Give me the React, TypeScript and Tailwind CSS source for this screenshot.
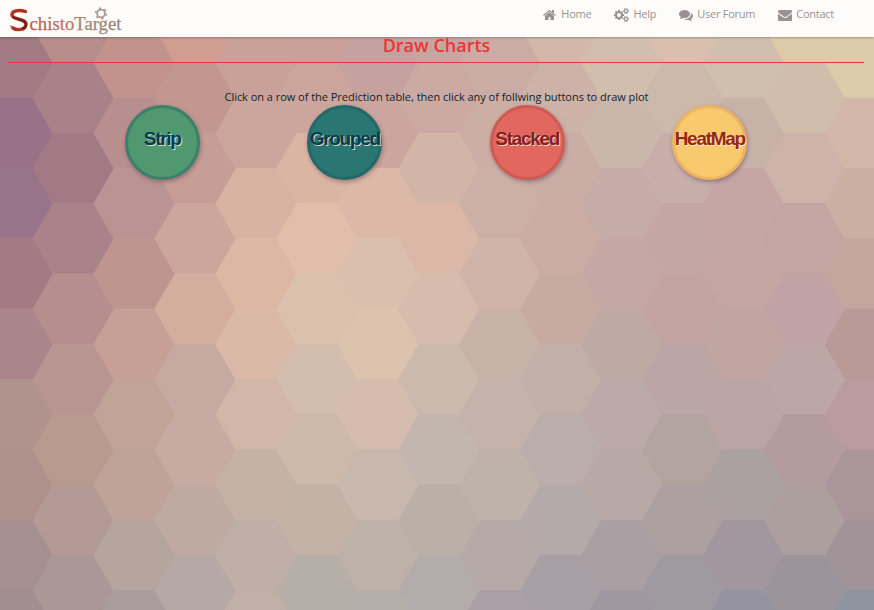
import React from "react";

// Column and row pitch of the honeycomb backdrop
const COL = 60.95;
const ROW = 70.35;
const HALF_W = 40.6;
const HALF_FLAT = 20.3;

const columns: string[][] = [
  ["#a17a83", "#99728a", "#99738a", "#a27b85", "#aa868b", "#b0938d", "#ae918b", "#a68f90", "#a08e92"],
  ["#b78d8c", "#a98289", "#a27a86", "#a98389", "#b68e8e", "#b89590", "#b89a8e", "#b49a95", "#aa9796"],
  ["#c2938d", "#b88e8f", "#ba9492", "#bf968f", "#c6a097", "#c1a398", "#c0a398", "#b5a59c", "#ab9d9e"],
  ["#d09d91", "#c19790", "#c69e97", "#cca69c", "#d3ae9f", "#c6aaa2", "#c7aaa1", "#bfaaa2", "#b5a8a5"],
  ["#c9a199", "#cca69d", "#d8b2a2", "#dcb8a4", "#dbb9a9", "#d1b6a9", "#c6b1a5", "#c0afa7", "#c1b0a7"],
  ["#c9a19a", "#cca69d", "#dab5a3", "#e1bea9", "#dac1ad", "#d2bdae", "#ccb9aa", "#c4b2a7", "#b6afa8"],
  ["#c5a19f", "#cba69e", "#dbb8a7", "#dbbfae", "#dbc3ae", "#d5bcae", "#c8b8ad", "#beb1a8", "#b6afa9"],
  ["#c7a5a0", "#ccaaa3", "#d2b5a6", "#dab7a7", "#d6bcad", "#cbb9ad", "#c3b6af", "#bab0a6", "#b4abab"],
  ["#cbaca5", "#ccaea5", "#ccafa6", "#d0b4a9", "#c8b2a7", "#c5b2aa", "#bfb2a9", "#b6aaa9", "#aaa0a6"],
  ["#d3b7a8", "#ccb2a7", "#caada5", "#caaca5", "#c7aaa2", "#c2afa8", "#bbaeaa", "#b5aaaa", "#a9a0a5"],
  ["#d1beac", "#cbb6ac", "#c6aca7", "#c5a8a3", "#bfaaa3", "#bbaaa7", "#b8a9a7", "#aaa0a3", "#9f98a0"],
  ["#dabfae", "#cdb9ac", "#c8aea9", "#c4a7a3", "#c3a4a1", "#bba6a5", "#b4a4a0", "#aca1a0", "#9f99a0"],
  ["#d1bfad", "#c8b2a8", "#c5a6a3", "#c5a6a2", "#c0a5a0", "#bba5a4", "#aba1a0", "#a2979f", "#94939f"],
  ["#dccaa9", "#d1bdab", "#cdb3aa", "#c4a5a2", "#c1a3a5", "#bca6a6", "#b49c9e", "#ac9f9e", "#9b959b"],
  ["#ddcba9", "#d3b8a9", "#cbafa3", "#c4a69f", "#b99a97", "#bb9b9e", "#aa959b", "#a09499", "#8f95a0"],
];

function Honeycomb() {
  return (
    <svg className="absolute inset-0 h-full w-full" viewBox="0 0 874 610" aria-hidden="true">
      {columns.map((colors, c) =>
        colors.map((fill, r) => {
          const cx = 12.7 + c * COL;
          const top = (c % 2 === 0 ? 27.8 : -7.4) + r * ROW;
          const mid = top + ROW / 2;
          const bottom = top + ROW;
          const points = [
            [cx - HALF_W, mid],
            [cx - HALF_FLAT, top],
            [cx + HALF_FLAT, top],
            [cx + HALF_W, mid],
            [cx + HALF_FLAT, bottom],
            [cx - HALF_FLAT, bottom],
          ];
          return <polygon key={`${c}-${r}`} points={points.join(" ")} fill={fill} stroke={fill} strokeWidth="1.2" />;
        })
      )}
    </svg>
  );
}

const HOME =
  "M1408 992v480q0 26-19 45t-45 19h-384v-384h-256v384h-384q-26 0-45-19t-19-45v-480q0-1 .5-3t.5-3l575-474 575 474q1 2 1 6zm223-69l-62 74q-8 9-21 11h-3q-13 0-21-7l-692-577-692 577q-12 8-24 7-13-2-21-11l-62-74q-8-10-7-23.5t11-21.5l719-599q32-26 76-26t76 26l244 204v-195q0-14 9-23t23-9h192q14 0 23 9t9 23v408l219 182q10 8 11 21.5t-7 23.5z";
const COGS =
  "M896 896q0-106-75-181t-181-75-181 75-75 181 75 181 181 75 181-75 75-181zm768 512q0-52-38-90t-90-38-90 38-38 90q0 53 37.5 90.5t90.5 37.5 90.5-37.5 37.5-90.5zm0-1024q0-52-38-90t-90-38-90 38-38 90q0 53 37.5 90.5t90.5 37.5 90.5-37.5 37.5-90.5zm-384 421v185q0 10-7 19.5t-16 10.5l-155 24q-11 35-32 76 34 48 90 115 7 11 7 20 0 12-7 19-23 30-82.5 89.5t-78.5 59.5q-11 0-21-7l-115-90q-37 19-77 31-11 108-23 155-7 24-30 24h-186q-11 0-20-7.5t-10-17.5l-23-153q-34-10-75-31l-118 89q-7 7-20 7-11 0-21-8-144-133-144-160 0-9 7-19 10-14 41-53t47-61q-23-44-35-82l-152-24q-10-1-17-9.5t-7-19.5v-185q0-10 7-19.5t16-10.5l155-24q11-35 32-76-34-48-90-115-7-11-7-20 0-12 7-20 22-30 82-89t79-59q11 0 21 7l115 90q34-18 77-32 11-108 23-154 7-24 30-24h186q11 0 20 7.500t10 17.500l23 153q34 10 75 31l118-89q8-7 20-7 11 0 21 8 144 133 144 160 0 8-7 19-12 16-42 54t-45 60q23 48 34 82l152 23q10 2 17 10.500t7 19.500zm640 533v140q0 16-149 31-12 27-30 52 51 113 51 138 0 4-4 7-122 71-124 71-8 0-46-47t-52-68q-20 2-30 2t-30-2q-14 21-52 68t-46 47q-2 0-124-71-4-3-4-7 0-25 51-138-18-25-30-52-149-15-149-31v-140q0-16 149-31 13-29 30-52-51-113-51-138 0-4 4-7 4-2 35-20t59-34 30-16q8 0 46 46.500t52 67.500q20-2 30-2t30 2q51-71 92-112l6-2q4 0 124 70 4 3 4 7 0 25-51 138 17 23 30 52 149 15 149 31zm0-1024v140q0 16-149 31-12 27-30 52 51 113 51 138 0 4-4 7-122 71-124 71-8 0-46-47t-52-68q-20 2-30 2t-30-2q-14 21-52 68t-46 47q-2 0-124-71-4-3-4-7 0-25 51-138-18-25-30-52-149-15-149-31v-140q0-16 149-31 13-29 30-52-51-113-51-138 0-4 4-7 4-2 35-20t59-34 30-16q8 0 46 46.500t52 67.500q20-2 30-2t30 2q51-71 92-112l6-2q4 0 124 70 4 3 4 7 0 25-51 138 17 23 30 52 149 15 149 31z";
const COMMENTS =
  "M1408 768q0 139-94 257t-256.500 186.500-353.500 68.500q-86 0-176-16-124 88-278 128-36 9-86 16h-3q-11 0-20.500-8t-11.500-21q-1-3-1-6.500t.5-6.500 2-6l2.500-5 3.500-5.500 4-5 4.500-5 4-4.500q5-6 23-25t26-29.500 22.500-29 25-38.500 20.500-44q-124-72-195-177t-71-224q0-139 94-257t256.500-186.500 353.500-68.500 353.500 68.500 256.500 186.500 94 257zm384 256q0 120-71 224.500t-195 176.500q10 24 20.500 44t25 38.500 22.500 29 26 29.500 23 25q1 1 4 4.500t4.500 5 4 5 3.500 5.500l2.500 5 2 6 .5 6.500-1 6.500q-3 14-13 22t-22 7q-50-7-86-16-154-40-278-128-90 16-176 16-271 0-472-132 58 4 88 4 161 0 309-45t264-129q125-92 192-212t67-254q0-77-23-152 129 71 204 178t75 230z";
const ENVELOPE =
  "M1792 710v794q0 66-47 113t-113 47h-1472q-66 0-113-47t-47-113v-794q44 49 101 87 362 246 497 345 57 42 92.500 65.500t94.500 48 110 24.500h2q51 0 110-24.500t94.500-48 92.500-65.500q170-123 498-345 57-39 100-87zm0-294q0 79-49 151t-122 123q-376 261-468 325-10 7-42.500 31t-54 38.500-52 32.500-57.500 27-50 9h-2q-23 0-50-9t-57.500-27-52-32.500-54-38.500-42.500-31q-91-64-262-182.500t-205-142.500q-62-42-117-115.500t-55-136.500q0-78 41.500-130t118.500-52h1472q65 0 112.500 47t47.500 113z";

const links = [
  { label: "Home", path: HOME, box: "0 0 1792 1792", size: "w-[14px]" },
  { label: "Help", path: COGS, box: "0 0 1920 1792", size: "w-[15px]" },
  { label: "User Forum", path: COMMENTS, box: "0 0 1792 1792", size: "w-[14px]" },
  { label: "Contact", path: ENVELOPE, box: "0 0 1792 1792", size: "w-[14px]" },
];

function Logo() {
  return (
    <svg className="ml-[8px] h-[37px] w-[118px] overflow-visible" viewBox="8 0 118 37" role="img" aria-label="SchistoTarget">
      <defs>
        <linearGradient id="word" gradientUnits="userSpaceOnUse" x1="29" y1="0" x2="122" y2="0">
          <stop offset="0" stopColor="#ba5a4c" />
          <stop offset="0.4" stopColor="#bd7460" />
          <stop offset="0.6" stopColor="#a58473" />
          <stop offset="1" stopColor="#97847c" />
        </linearGradient>
      </defs>
      <path
        d="M25.500 11.500C19 9.500 11.500 10.500 12 15C12.500 20.500 26.500 18 26 24.500C25.500 30.500 16.500 30.500 13 28"
        fill="none"
        stroke="#b5301f"
        strokeWidth="3.400"
        strokeLinecap="round"
      />
      <path d="M13 17C17 20 25.500 19 26 24.500C26 27 24 28.500 22 29" fill="none" stroke="#6c211b" strokeWidth="2" />
      <path d="M10.500 25.500l3 4" stroke="#a23a2b" strokeWidth="1.200" />
      <text
        x="29.500"
        y="30"
        textLength="92"
        lengthAdjust="spacingAndGlyphs"
        fontSize="19.500"
        fill="url(#word)"
        stroke="url(#word)"
        strokeWidth="0.250"
        fontFamily="'Liberation Serif', serif"
      >
        chistoTarget
      </text>
      <circle cx="101" cy="13.500" r="3.900" fill="none" stroke="#a69a99" strokeWidth="1.800" />
      <circle cx="101" cy="13.500" r="5.400" fill="none" stroke="#b89a84" strokeWidth="1.600" strokeDasharray="2.300 3.350" />
    </svg>
  );
}

const charts = [
  { label: "Strip", style: "bg-[#50986f] border-[#3b8069] text-[#083b52]" },
  { label: "Grouped", style: "bg-[#2a7673] border-[#216a69] text-[#083b52]" },
  { label: "Stacked", style: "bg-[#e1675f] border-[#d05a54] text-[#85211d]" },
  { label: "HeatMap", style: "bg-[#f9c96e] border-[#edb462] text-[#952711]" },
];

export default function App() {
  return (
    <div className="relative h-[610px] w-[874px] overflow-hidden font-['Open_Sans',sans-serif]">
      <Honeycomb />
      <div className="relative flex h-full flex-col">
        <header className="flex h-[37px] shrink-0 items-start justify-between bg-[#fdfcfb] shadow-[0_1px_2px_rgba(0,0,0,0.25)]">
          <Logo />
          <nav className="mr-[40px] flex gap-[23px] pt-[6px] text-[11px] leading-[16px] tracking-[-0.25px] text-[#9b9094]">
            {links.map((l) => (
              <a key={l.label} className="flex items-center gap-[4px]">
                <svg className={`${l.size} mt-[2px] h-[14px]`} viewBox={l.box} fill="currentColor">
                  <path d={l.path} />
                </svg>
                {l.label}
              </a>
            ))}
          </nav>
        </header>
        <main className="px-[9px] pr-[10px]">
          <h1 className="h-[26px] border-b border-[#ee3535] text-center text-[18px] leading-[17px] font-semibold text-[#ee3535]">
            Draw Charts
          </h1>
          <p className="mt-[26px] text-center text-[11px] leading-[16px] font-medium tracking-[-0.03px] text-[#111f29]">
            Click on a row of the Prediction table, then click any of follwing buttons to draw plot
          </p>
          <div className="ml-[62px] flex w-[730px] font-['Liberation_Sans',Arial,sans-serif]">
            {charts.map((c) => (
              <div key={c.label} className="flex w-[182.5px] justify-center">
                <button
                  className={`${c.style} flex h-[75px] w-[75px] justify-center rounded-full border-[3px] pt-[19px] text-[19px] leading-[23px] font-bold tracking-[-1.3px] shadow-[1px_2px_4px_rgba(70,40,60,0.4)] [text-shadow:1px_1px_0_rgba(255,240,225,0.8)]`}
                >
                  {c.label}
                </button>
              </div>
            ))}
          </div>
        </main>
      </div>
    </div>
  );
}
